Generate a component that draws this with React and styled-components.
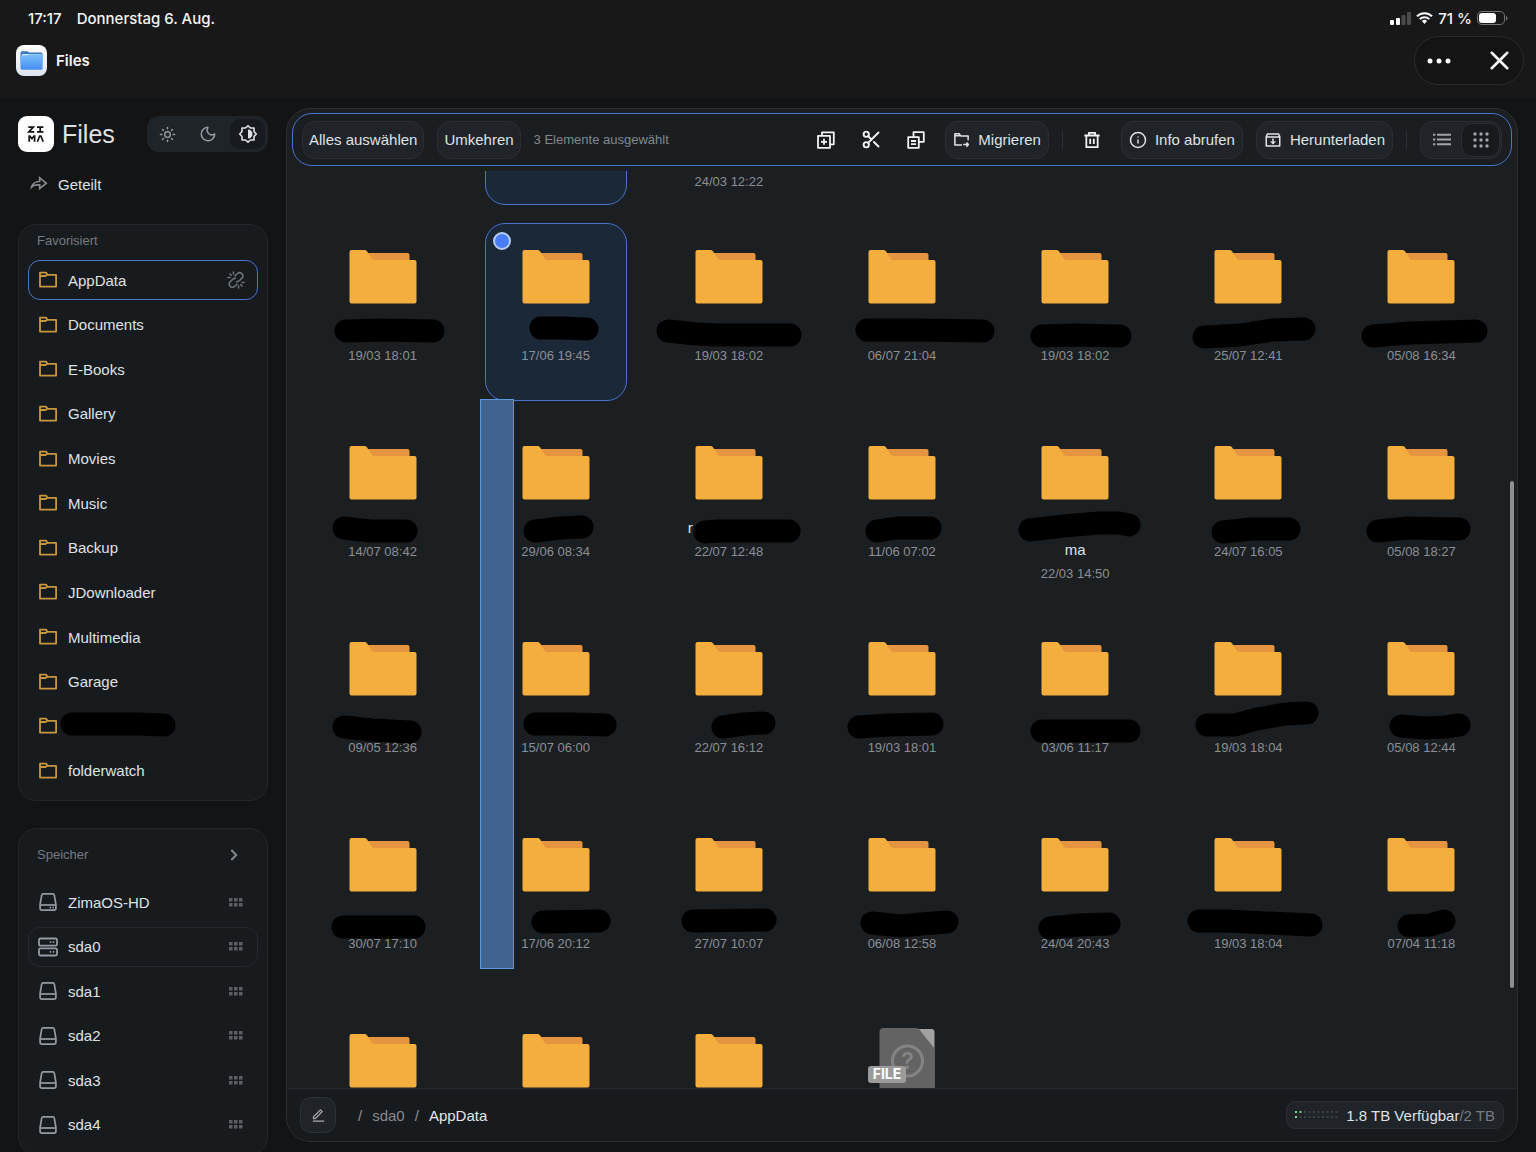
import React, { useLayoutEffect, useRef, useState } from "react";
import styled, { createGlobalStyle } from "styled-components";
import { Info, Moon, Scissors, Sun, X } from "lucide-react";
import { RiEditLine, RiInboxArchiveLine, RiShareForwardLine } from "react-icons/ri";

const GlobalStyle = createGlobalStyle`
  * {
    box-sizing: border-box;
  }

  body {
    margin: 0;
    background: #121416;
    color: #dfe2e5;
    font-family: "Liberation Sans", Arial, sans-serif;
    font-size: 15px;
    -webkit-font-smoothing: antialiased;
  }

  button {
    font: inherit;
    color: inherit;
    cursor: pointer;
  }

  a {
    color: inherit;
    text-decoration: none;
  }

  ul {
    list-style: none;
    margin: 0;
    padding: 0;
  }

  svg {
    display: block;
    flex-shrink: 0;
  }
`;

const Screen = styled.div`
  display: flex;
  flex-direction: column;
  height: 100vh;
  overflow: hidden;
`;

const SystemBar = styled.header`
  flex-shrink: 0;
  background: #181818;
  color: #f4f4f4;
  font-family: Inter, "Liberation Sans", sans-serif;
`;

const StatusRow = styled.div`
  display: flex;
  align-items: center;
  justify-content: space-between;
  height: 36px;
  padding: 0 28px;
  font-weight: 500;
`;

const StatusGroup = styled.div`
  display: flex;
  align-items: center;
  gap: ${({ $gap }) => $gap}px;
`;

const AppRow = styled.div`
  display: flex;
  align-items: flex-start;
  justify-content: space-between;
  height: 62px;
  padding: 0 12px 0 16px;
`;

const AppName = styled.div`
  display: flex;
  align-items: center;
  gap: 9px;
  height: 49px;
  font-weight: 600;
`;

const WindowPill = styled.div`
  display: flex;
  align-items: center;
  justify-content: space-between;
  width: 110px;
  height: 49px;
  padding: 0 8px;
  border: 1px solid #2b2b2b;
  border-radius: 25px;
  background: #141414;
`;

const PillButton = styled.button`
  display: flex;
  align-items: center;
  justify-content: center;
  width: 32px;
  height: 32px;
  padding: 0;
  border: 0;
  background: none;
`;

const Workspace = styled.div`
  display: flex;
  flex: 1;
  gap: 18px;
  min-height: 0;
  padding: 0 18px;
`;

const Sidebar = styled.aside`
  display: flex;
  flex-direction: column;
  flex-shrink: 0;
  width: 250px;
  padding-top: 18px;
  overflow: hidden;
`;

const Brand = styled.div`
  display: flex;
  align-items: center;
  gap: 8px;
  height: 36px;
  flex-shrink: 0;
`;

const BrandName = styled.h1`
  flex: 1;
  margin: 0;
  font-size: 25px;
  font-weight: 400;
  line-height: 34px;
`;

const ThemeSwitch = styled.div`
  display: flex;
  align-items: center;
  gap: 5px;
  height: 36px;
  padding: 0 3px;
  border-radius: 12px;
  background: #1f2429;
`;

const ThemeButton = styled.button`
  display: flex;
  align-items: center;
  justify-content: center;
  width: 35px;
  height: 30px;
  padding: 0;
  border: 0;
  border-radius: 10px;
  background: ${({ $active }) => ($active ? "#171b1f" : "none")};
  color: ${({ $active }) => ($active ? "#dfe2e5" : "#969ba1")};
`;

const SharedLink = styled.a`
  display: flex;
  align-items: center;
  gap: 10px;
  height: 40px;
  flex-shrink: 0;
  margin: 12px 0 20px;
  padding-left: 10px;

  svg {
    color: #858a90;
  }
`;

const Card = styled.section`
  flex-shrink: 0;
  margin-bottom: 27px;
  padding: ${({ $roomy }) => ($roomy ? "16px 9px 9px" : "6px 9px 9px")};
  border: 1px solid #23272b;
  border-radius: 18px;
  background: #181b1e;
`;

const CardHeader = styled.div`
  display: flex;
  align-items: center;
  justify-content: space-between;
  height: 20px;
  margin-bottom: ${({ $gap }) => $gap}px;
  padding: 0 20px 0 9px;
  color: #757a81;
`;

const CardTitle = styled.h2`
  margin: 0;
  font-size: 13px;
  font-weight: 400;
  line-height: 20px;
`;

const NavList = styled.ul`
  display: flex;
  flex-direction: column;
  justify-content: space-between;
  height: ${({ $height }) => $height}px;
`;

const borders = {
  current: "#4873cf",
  open: "#24282d",
};

const NavLink = styled.a`
  display: flex;
  align-items: center;
  gap: 10px;
  height: 40px;
  padding: 0 12px 0 9px;
  border: 1px solid ${({ $state }) => borders[$state] || "transparent"};
  border-radius: 12px;
  color: #dfe2e5;
`;

const NavLabel = styled.span`
  flex: 1;
`;

const NavScribble = styled.svg`
  margin-left: -20px;
  overflow: visible;
`;

const Panel = styled.main`
  position: relative;
  display: flex;
  flex: 1;
  flex-direction: column;
  min-width: 0;
  margin: 10px 0;
  border: 1px solid #2b2f34;
  border-radius: 24px;
  background: #1c1f22;
  overflow: hidden;
`;

const Toolbar = styled.div`
  display: flex;
  align-items: center;
  justify-content: space-between;
  flex-shrink: 0;
  height: 53px;
  margin: 4px 5px 5px;
  padding: 0 9px;
  border: 1px solid #4873cf;
  border-radius: 20px;
  background: #1b1e21;
`;

const ToolGroup = styled.div`
  display: flex;
  align-items: center;
  gap: 13px;
`;

const ToolButton = styled.button`
  display: flex;
  align-items: center;
  gap: 8px;
  height: 38px;
  padding: 0 ${({ $withIcon }) => ($withIcon ? 7 : 6)}px;
  border: 1px solid #2a2e32;
  border-radius: 13px;
  background: #202428;
  white-space: nowrap;
`;

const IconButton = styled.button`
  display: flex;
  align-items: center;
  justify-content: center;
  width: 32px;
  height: 38px;
  padding: 0;
  border: 0;
  background: none;
  color: #f1f2f3;
`;

const Count = styled.span`
  font-size: 13px;
  color: #83878c;
`;

const Divider = styled.span`
  width: 1px;
  height: 18px;
  background: #2b2f34;
`;

const ViewSwitch = styled.div`
  display: flex;
  align-items: center;
  height: 38px;
  padding: 0 1px;
  border: 1px solid #2a2e32;
  border-radius: 13px;
  background: #202428;
`;

const ViewButton = styled.button`
  display: flex;
  align-items: center;
  justify-content: center;
  width: 39px;
  height: 34px;
  padding: 0;
  border: 1px solid ${({ $active }) => ($active ? "#2a2e32" : "transparent")};
  border-radius: 11px;
  background: ${({ $active }) => ($active ? "#181b1e" : "none")};
  color: #a0a4aa;
`;

const Scroller = styled.div`
  flex: 1;
  min-height: 0;
  overflow-y: auto;
  scrollbar-width: none;
`;

const FileGrid = styled.ul`
  position: relative;
  display: grid;
  grid-template-columns: repeat(7, 1fr);
  justify-items: center;
  row-gap: 18px;
  padding: 0 9px 24px;
`;

const FileItem = styled.li`
  position: relative;
  display: flex;
  flex-direction: column;
  align-items: center;
  width: 142px;
  height: 178px;
  padding-top: 9px;
  border: 1px solid ${({ $selected }) => ($selected ? "#4873cf" : "transparent")};
  border-radius: 20px;
  background: ${({ $selected }) => ($selected ? "#1b2838" : "none")};
`;

const Check = styled.input`
  position: absolute;
  top: 8px;
  left: 7px;
  width: 18px;
  height: 18px;
  margin: 0;
  appearance: none;
  border: 2px solid #b9cbfb;
  border-radius: 50%;
  background: #4a7df5;
`;

const IconArea = styled.div`
  display: flex;
  align-items: center;
  justify-content: center;
  width: 100%;
  height: 88px;
`;

const FileName = styled.div`
  position: relative;
  width: 142px;
  min-height: 22px;
  margin-bottom: 2px;
  line-height: 22px;
  text-align: center;
`;

const HiddenRest = styled.span`
  display: inline-block;
  width: 77px;
`;

const SecondLine = styled.div`
  min-height: 44px;
  padding-top: 22px;
`;

const Scribble = styled.svg`
  position: absolute;
  top: 0;
  left: 0;
  overflow: visible;
`;

const FileDate = styled.time`
  font-size: 13px;
  line-height: 22px;
  color: #8b8f94;
`;

const Marquee = styled.li`
  position: absolute;
  top: 372px;
  left: 193px;
  width: 34px;
  height: 570px;
  border: 1px solid #5c9ade;
  background: #40638f;
`;

const ScrollThumb = styled.div`
  position: absolute;
  top: 372px;
  right: 3px;
  width: 4px;
  height: 507px;
  border-radius: 2px;
  background: #8d8f91;
`;

const Footer = styled.footer`
  display: flex;
  align-items: center;
  justify-content: space-between;
  flex-shrink: 0;
  height: 53px;
  padding: 0 13px;
  border-top: 1px solid #262a2e;
  background: #181b1e;
`;

const EditButton = styled.button`
  display: flex;
  align-items: center;
  justify-content: center;
  width: 36px;
  height: 36px;
  padding: 0;
  border: 1px solid #2d3238;
  border-radius: 11px;
  background: #202428;
  color: #a6aab0;
`;

const Breadcrumb = styled.nav`
  display: flex;
  align-items: center;
  gap: 10px;
  margin-left: 9px;
  color: #8b9097;
`;

const Crumb = styled.a`
  color: ${({ $current }) => ($current ? "#e4e6e8" : "#858a91")};
`;

const Capacity = styled.div`
  display: flex;
  align-items: center;
  gap: 8px;
  height: 28px;
  padding: 0 8px;
  border: 1px solid #2a2e32;
  border-radius: 9px;
  background: #202428;
`;

const Total = styled.span`
  color: #777c82;
`;

/* ---------- icons ---------- */

const Outline = ({ size = 20, width = 1.8, children }) => (
  <svg
    width={size}
    height={size}
    viewBox="0 0 20 20"
    fill="none"
    stroke="currentColor"
    strokeWidth={width}
    aria-hidden="true"
  >
    {children}
  </svg>
);

const SignalIcon = () => (
  <svg width="21" height="13" viewBox="0 0 21 13" fill="#fff">
    <rect x="0" y="8" width="4" height="5" rx="1" />
    <rect x="6" y="6" width="4" height="7" rx="1" />
    <rect x="11.5" y="3" width="4" height="10" rx="1" fill="#4a4a4a" />
    <rect x="17" y="0" width="4" height="13" rx="1" fill="#4a4a4a" />
  </svg>
);

const WifiIcon = () => (
  <svg width="17" height="12" viewBox="0 0 17 12" fill="none" stroke="#fff" strokeWidth="2">
    <path d="M1 4.300a10.700 10.700 0 0 1 15 0" />
    <path d="M3.700 7.100a6.900 6.900 0 0 1 9.600 0" />
    <path d="M5.900 9 8.500 12l2.600-3a3.800 3.800 0 0 0-5.200 0Z" fill="#fff" stroke="none" />
  </svg>
);

const BatteryIcon = () => (
  <svg width="31" height="14" viewBox="0 0 31 14" fill="none">
    <rect x="0.5" y="0.5" width="27" height="13" rx="4.3" stroke="#777" />
    <rect x="2" y="2" width="17" height="10" rx="3" fill="#fff" />
    <path d="M29 5v4.500c1-.4 1.600-1.200 1.600-2.200S30 5.400 29 5Z" fill="#777" />
  </svg>
);

const AppIcon = () => (
  <svg width="31" height="31" viewBox="0 0 31 31">
    <defs>
      <linearGradient id="tile" x1="0" y1="0" x2="0" y2="1">
        <stop offset="0" stopColor="#fff" />
        <stop offset="1" stopColor="#dde3f0" />
      </linearGradient>
      <linearGradient id="front" x1="0" y1="0" x2="0" y2="1">
        <stop offset="0" stopColor="#7cc0fb" />
        <stop offset="1" stopColor="#438cf0" />
      </linearGradient>
    </defs>
    <rect width="31" height="31" rx="8" fill="url(#tile)" />
    <path d="M4.500 8a1.800 1.800 0 0 1 1.800-1.800h5l2 1.400h11.500a1.800 1.800 0 0 1 1.800 1.800V14h-22Z" fill="#3c78c4" />
    <path d="M6 9h19v4H6z" fill="#d8ecff" />
    <path d="M4 11.800c0-1 .6-1.500 1.500-1.500h6l2-1h12c1 0 1.500.7 1.500 1.600l-.5 12.300c-.1 1-.8 1.600-1.700 1.600H6.300c-1 0-1.600-.7-1.700-1.600Z" fill="url(#front)" />
  </svg>
);

const MoreIcon = () => (
  <svg width="24" height="6" viewBox="0 0 24 6" fill="#fff">
    <circle cx="3" cy="3" r="2.5" />
    <circle cx="12" cy="3" r="2.5" />
    <circle cx="21" cy="3" r="2.5" />
  </svg>
);

const ZimaLogo = () => (
  <svg width="36" height="36" viewBox="0 0 36 36" fill="none" stroke="#111" strokeWidth="1.7">
    <rect width="36" height="36" rx="9" fill="#fff" stroke="none" />
    <path d="M10.300 11.200h5l-4.400 4.700h5.400M19 11.200h6.400M19 15.900h6.400M22.200 11.200v4.700" />
    <path d="M11.200 25.800v-5.800h.6l2.100 2.700 2.100-2.700h.6v5.800M19.400 25.800l2.300-5.800h1.200l2.300 5.800" />
  </svg>
);

const AutoThemeIcon = () => (
  <Outline size={20} width={1.6}>
    <path d="M10 1.800 12.500 4H16v3.500l2.300 2.500L16 12.500V16h-3.500L10 18.200 7.500 16H4v-3.500L1.700 10 4 7.500V4h3.500Z" strokeLinejoin="round" />
    <path d="M10 5.500a4.500 4.500 0 0 1 0 9Z" fill="currentColor" stroke="none" />
  </Outline>
);

const FavouriteIcon = () => (
  <svg width="20" height="20" viewBox="0 0 20 20" fill="none" stroke="#c8963f" strokeWidth="1.8" strokeLinejoin="round">
    <path d="M2 2.600h6l1.500 2.200h8.600v11.800H2Z" />
    <path d="M2 6h5.500l1.900-1.400" />
  </svg>
);

const UnlinkIcon = () => (
  <svg width="18" height="18" viewBox="0 0 18 18" fill="none" stroke="#6d7278" strokeWidth="1.6" strokeLinecap="round">
    <path d="m8 5 2.300-2.300a3.100 3.100 0 0 1 4.600 4.400l-2.600 2.600a3 3 0 0 1-2.500.9" />
    <path d="m10 13-2.300 2.300a3.100 3.100 0 0 1-4.600-4.400l2.600-2.600a3 3 0 0 1 2.500-.9" />
    <path d="M6.500 1v2M3 3l1.300 1.300M1 6.500h2M11.500 15v2M13.700 13.700 15 15M15 11.500h2" />
  </svg>
);

const DriveIcon = ({ lights }) => (
  <svg width="20" height="20" viewBox="0 0 20 20" fill="none" stroke="#969ba3" strokeWidth="1.7" strokeLinejoin="round">
    <path d="M5.200 1.800h9.600c.8 0 1.300.5 1.500 1.300l1.600 9.400v3.700c0 1.200-.7 1.900-1.800 1.900H3.900c-1.100 0-1.800-.7-1.800-1.900v-3.700l1.600-9.400c.2-.8.7-1.300 1.500-1.300Z" />
    <path d="M2.200 13h15.600" />
    {lights && <path d="M11.500 15.600h1.500M14.300 15.600h1.500" />}
  </svg>
);

const RaidIcon = () => (
  <svg width="20" height="20" viewBox="0 0 20 20" fill="none" stroke="#969ba3" strokeWidth="1.8">
    <rect x="1" y="1.5" width="18" height="7.2" rx="1.5" />
    <rect x="1" y="11.3" width="18" height="7.2" rx="1.5" />
    <path d="M11.800 5.100h1.500M14.800 5.100h1.500M11.800 14.900h1.500M14.800 14.900h1.500" />
  </svg>
);

const HandleIcon = () => (
  <svg width="18" height="9" viewBox="-2 0 18 9" fill="#5b5f64">
    {[0, 5, 10].map((x) => (
      <g key={x}>
        <rect x={x} width="3.5" height="3.5" />
        <rect x={x} y="5" width="3.5" height="3.5" />
      </g>
    ))}
  </svg>
);

const ChevronIcon = () => (
  <svg width="8" height="12" viewBox="0 0 8 12" fill="none" stroke="#858a90" strokeWidth="1.9">
    <path d="m1.300 1 5 5-5 5" />
  </svg>
);

const AddCopyIcon = () => (
  <Outline>
    <path d="M2 5.800h12v12H2ZM6 5.500V2.300h11.800v12h-3.300M8 8.800v6M5 11.800h6" strokeLinejoin="round" />
  </Outline>
);

const CopyIcon = () => (
  <Outline>
    <path d="M7.500 7V2.200h10.300v9.600H13M2.200 7.200h10.600v10.600H2.200ZM5 11h5M5 14.200h5" strokeLinejoin="round" />
  </Outline>
);

const MoveIcon = () => (
  <Outline size={17}>
    <path d="M10.500 16.500H2.200V3.200h5l1.800 2.600h8.800v5M2 5.500h6M12 16h6M15.800 13.500l2.300 2.500-2.300 2.500" strokeLinejoin="round" />
  </Outline>
);

const TrashIcon = () => (
  <Outline size={18} width={2}>
    <path d="M1.500 5h17M6.500 4.800V2h7v2.800M3.700 5v13h12.600V5M8 8.500v6M12 8.500v6" strokeLinejoin="round" />
  </Outline>
);

const ListIcon = () => (
  <svg width="18" height="13" viewBox="0 0 18 13" fill="none" stroke="currentColor" strokeWidth="1.9">
    <path d="M0 1.700h2.300M4 1.700h14M0 6.500h2.300M4 6.500h14M0 11.300h2.300M4 11.300h14" />
  </svg>
);

const GridIcon = () => (
  <svg width="16" height="16" viewBox="0 0 16 16" fill="currentColor">
    {[2, 8, 14].map((y) =>
      [2, 8, 14].map((x) => <circle key={`${x}-${y}`} cx={x} cy={y} r="1.7" />)
    )}
  </svg>
);

const FolderIcon = () => (
  <svg width="68" height="54" viewBox="0 0 68 54">
    <path d="M14 3h44.500a2 2 0 0 1 2 2v9H14Z" fill="#e5953f" />
    <path d="M2.500 0H15c1.600 0 2.600.6 3.500 2l3.600 5.800c1 1.600 2 2.200 3.800 2.200H65.500a2 2 0 0 1 2 2v39.500a2 2 0 0 1-2 2h-63a2 2 0 0 1-2-2V2a2 2 0 0 1 2-2Z" fill="#f4ae3e" />
  </svg>
);

const UnknownFileIcon = () => (
  <svg width="68" height="66" viewBox="-5 0 68 66">
    <path d="M45 1h13.500a3 3 0 0 1 3 3v18Z" fill="#a2a2a2" />
    <path d="M10.500 0H43c1.500 0 2.500.5 3.500 1.700L61 20c.7 1 1 1.800 1 3v40a3 3 0 0 1-3 3H10.500a4 4 0 0 1-4-4V4a4 4 0 0 1 4-4Z" fill="#636363" />
    <circle cx="34.5" cy="33" r="15" fill="none" stroke="#848484" strokeWidth="3" />
    <text x="34.5" y="41" fill="#848484" fontFamily="Inter, sans-serif" fontSize="23" fontWeight="600" textAnchor="middle">?</text>
    <rect x="-5" y="38" width="38" height="17" rx="3" fill="#9b9b9b" />
    <text x="14" y="51" fill="#fff" fontFamily="Inter, sans-serif" fontSize="14" fontWeight="700" textAnchor="middle">FILE</text>
  </svg>
);

const UsageDots = () => (
  <svg width="43" height="8" viewBox="0 0 43 8">
    {Array.from({ length: 20 }, (_, i) => {
      const col = Math.floor(i / 2);
      return (
        <rect
          key={i}
          x={col * 4.5}
          y={(i % 2) * 5}
          width="2"
          height="2"
          fill={i < 3 ? "#6fdc83" : "#3c4145"}
        />
      );
    })}
  </svg>
);

/* ---------- data ---------- */

const favourites = [
  "AppData",
  "Documents",
  "E-Books",
  "Gallery",
  "Movies",
  "Music",
  "Backup",
  "JDownloader",
  "Multimedia",
  "Garage",
  null,
  "folderwatch",
];

const drives = [
  { name: "ZimaOS-HD", kind: "system" },
  { name: "sda0", kind: "raid" },
  { name: "sda1" },
  { name: "sda2" },
  { name: "sda3" },
  { name: "sda4" },
];

// mark: pen stroke laid over the name, in the coordinates of the name line
const files = [
  {},
  { selected: true },
  { date: "24/03 12:22", second: " " },
  {},
  {},
  {},
  {},

  { date: "19/03 18:01", mark: "M34 10 70 9 121 10" },
  { date: "17/06 19:45", mark: "M56 7 78 7 102 8", selected: true },
  { date: "19/03 18:02", mark: "M10 10 38 13 60 14 132 14" },
  { date: "06/07 21:04", mark: "M36 9 90 9 152 10" },
  { date: "19/03 18:02", mark: "M38 15 70 14 116 15" },
  { date: "25/07 12:41", mark: "M27 16 63 14 95 9 127 8" },
  { date: "05/08 16:34", mark: "M23 15 60 12 126 10" },

  { date: "14/07 08:42", mark: "M32 11 58 14 94 14" },
  { date: "29/06 08:34", mark: "M50 14 75 11 97 10" },
  { date: "22/07 12:48", mark: "M47 15 60 14 131 14", first: "r" },
  { date: "11/06 07:02", mark: "M46 14 66 11 99 11" },
  { date: "22/03 14:50", mark: "M26 13 60 9 95 6 115 6 125 8", second: "ma" },
  { date: "24/07 16:05", mark: "M46 15 75 12 112 12" },
  { date: "05/08 18:27", mark: "M28 14 58 11 109 12" },

  { date: "09/05 12:36", mark: "M32 14 60 17 98 19" },
  { date: "15/07 06:00", mark: "M50 11 85 11 120 12" },
  { date: "22/07 16:12", mark: "M65 14 86 11 106 10" },
  { date: "19/03 18:01", mark: "M28 14 58 12 101 11" },
  { date: "03/06 11:17", mark: "M38 18 125 18" },
  { date: "19/03 18:04", mark: "M30 12 58 12 80 6 108 1 130 0" },
  { date: "05/08 12:44", mark: "M51 13 75 15 95 14 109 12" },

  { date: "30/07 17:10", mark: "M31 18 102 18" },
  { date: "17/06 20:12", mark: "M58 13 114 12" },
  { date: "27/07 10:07", mark: "M35 12 107 11" },
  { date: "06/08 12:58", mark: "M41 14 70 17 90 15 116 13" },
  { date: "24/04 20:43", mark: "M46 19 76 16 105 15" },
  { date: "19/03 18:04", mark: "M22 12 50 12 134 16" },
  { date: "07/04 11:18", mark: "M59 17 80 16 94 12" },

  {},
  {},
  {},
  { unknown: true },
];

const themes = [
  { id: "light", label: "Hell", icon: <Sun size={17} strokeWidth={2} /> },
  { id: "dark", label: "Dunkel", icon: <Moon size={18} strokeWidth={2} /> },
  { id: "auto", label: "Automatisch", icon: <AutoThemeIcon /> },
];

const DriveSymbol = ({ kind }) =>
  kind === "raid" ? <RaidIcon /> : <DriveIcon lights={kind === "system"} />;

const File = ({ file }) => (
  <FileItem $selected={file.selected}>
    {file.selected && <Check type="checkbox" defaultChecked aria-label="Auswählen" />}
    <IconArea>{file.unknown ? <UnknownFileIcon /> : <FolderIcon />}</IconArea>
    <FileName>
      {file.first && (
        <>
          {file.first}
          <HiddenRest />
        </>
      )}
      {file.second && <SecondLine>{file.second}</SecondLine>}
      {file.mark && (
        <Scribble width="142" height="23" viewBox="0 0 142 23" fill="none">
          <path
            d={file.mark}
            stroke="#000"
            strokeWidth="23"
            strokeLinecap="round"
            strokeLinejoin="round"
          />
        </Scribble>
      )}
    </FileName>
    {file.date && <FileDate>{file.date}</FileDate>}
  </FileItem>
);

const App = () => {
  const [theme, setTheme] = useState("auto");
  const [view, setView] = useState("grid");
  const scroller = useRef(null);

  useLayoutEffect(() => {
    scroller.current.scrollTop = 144;
  }, []);

  return (
    <>
      <GlobalStyle />
      <Screen>
        <SystemBar>
          <StatusRow>
            <StatusGroup $gap={15}>
              <span>17:17</span>
              <span>Donnerstag 6. Aug.</span>
            </StatusGroup>
            <StatusGroup $gap={5}>
              <SignalIcon />
              <WifiIcon />
              <span>71 %</span>
              <BatteryIcon />
            </StatusGroup>
          </StatusRow>
          <AppRow>
            <AppName>
              <AppIcon />
              <span>Files</span>
            </AppName>
            <WindowPill>
              <PillButton aria-label="Mehr">
                <MoreIcon />
              </PillButton>
              <PillButton aria-label="Schließen">
                <X size={31} strokeWidth={2} />
              </PillButton>
            </WindowPill>
          </AppRow>
        </SystemBar>

        <Workspace>
          <Sidebar>
            <Brand>
              <ZimaLogo />
              <BrandName>Files</BrandName>
              <ThemeSwitch>
                {themes.map((item) => (
                  <ThemeButton
                    key={item.id}
                    aria-label={item.label}
                    $active={theme === item.id}
                    onClick={() => setTheme(item.id)}
                  >
                    {item.icon}
                  </ThemeButton>
                ))}
              </ThemeSwitch>
            </Brand>

            <SharedLink href="#shared">
              <RiShareForwardLine size={20} />
              Geteilt
            </SharedLink>

            <Card>
              <CardHeader $gap={9}>
                <CardTitle>Favorisiert</CardTitle>
              </CardHeader>
              <NavList $height={531}>
                {favourites.map((name, index) => (
                  <li key={index}>
                    <NavLink href="#favourite" $state={index === 0 ? "current" : ""}>
                      <FavouriteIcon />
                      {name ? (
                        <NavLabel>{name}</NavLabel>
                      ) : (
                        <NavScribble width="128" height="24" viewBox="0 0 128 24" fill="none">
                          <path d="M24 10 90 10 116 11" stroke="#000" strokeWidth="23" strokeLinecap="round" />
                        </NavScribble>
                      )}
                      {index === 0 && <UnlinkIcon />}
                    </NavLink>
                  </li>
                ))}
              </NavList>
            </Card>

            <Card $roomy>
              <CardHeader $gap={17}>
                <CardTitle>Speicher</CardTitle>
                <ChevronIcon />
              </CardHeader>
              <NavList $height={263}>
                {drives.map(({ name, kind }) => (
                  <li key={name}>
                    <NavLink href="#drive" $state={kind === "raid" ? "open" : ""}>
                      <DriveSymbol kind={kind} />
                      <NavLabel>{name}</NavLabel>
                      <HandleIcon />
                    </NavLink>
                  </li>
                ))}
              </NavList>
            </Card>
          </Sidebar>

          <Panel>
            <Toolbar>
              <ToolGroup>
                <ToolButton>Alles auswählen</ToolButton>
                <ToolButton>Umkehren</ToolButton>
                <Count>3 Elemente ausgewählt</Count>
              </ToolGroup>
              <ToolGroup>
                <IconButton aria-label="Duplizieren">
                  <AddCopyIcon />
                </IconButton>
                <IconButton aria-label="Ausschneiden">
                  <Scissors size={21} strokeWidth={2.2} />
                </IconButton>
                <IconButton aria-label="Kopieren">
                  <CopyIcon />
                </IconButton>
                <ToolButton $withIcon>
                  <MoveIcon />
                  Migrieren
                </ToolButton>
                <Divider />
                <IconButton aria-label="Löschen">
                  <TrashIcon />
                </IconButton>
                <ToolButton $withIcon>
                  <Info size={18} />
                  Info abrufen
                </ToolButton>
                <ToolButton $withIcon>
                  <RiInboxArchiveLine size={18} />
                  Herunterladen
                </ToolButton>
                <Divider />
                <ViewSwitch>
                  <ViewButton
                    aria-label="Liste"
                    $active={view === "list"}
                    onClick={() => setView("list")}
                  >
                    <ListIcon />
                  </ViewButton>
                  <ViewButton
                    aria-label="Raster"
                    $active={view === "grid"}
                    onClick={() => setView("grid")}
                  >
                    <GridIcon />
                  </ViewButton>
                </ViewSwitch>
              </ToolGroup>
            </Toolbar>

            <Scroller ref={scroller}>
              <FileGrid>
                {files.map((file, index) => (
                  <File key={index} file={file} />
                ))}
                <Marquee aria-hidden="true" />
              </FileGrid>
            </Scroller>
            <ScrollThumb />

            <Footer>
              <StatusGroup $gap={13}>
                <EditButton aria-label="Pfad bearbeiten">
                  <RiEditLine size={15} />
                </EditButton>
                <Breadcrumb aria-label="Pfad">
                  <span>/</span>
                  <Crumb href="#sda0">sda0</Crumb>
                  <span>/</span>
                  <Crumb href="#appdata" $current>
                    AppData
                  </Crumb>
                </Breadcrumb>
              </StatusGroup>
              <Capacity>
                <UsageDots />
                <span>
                  1.8 TB Verfügbar<Total>/2 TB</Total>
                </span>
              </Capacity>
            </Footer>
          </Panel>
        </Workspace>
      </Screen>
    </>
  );
};

export default App;
